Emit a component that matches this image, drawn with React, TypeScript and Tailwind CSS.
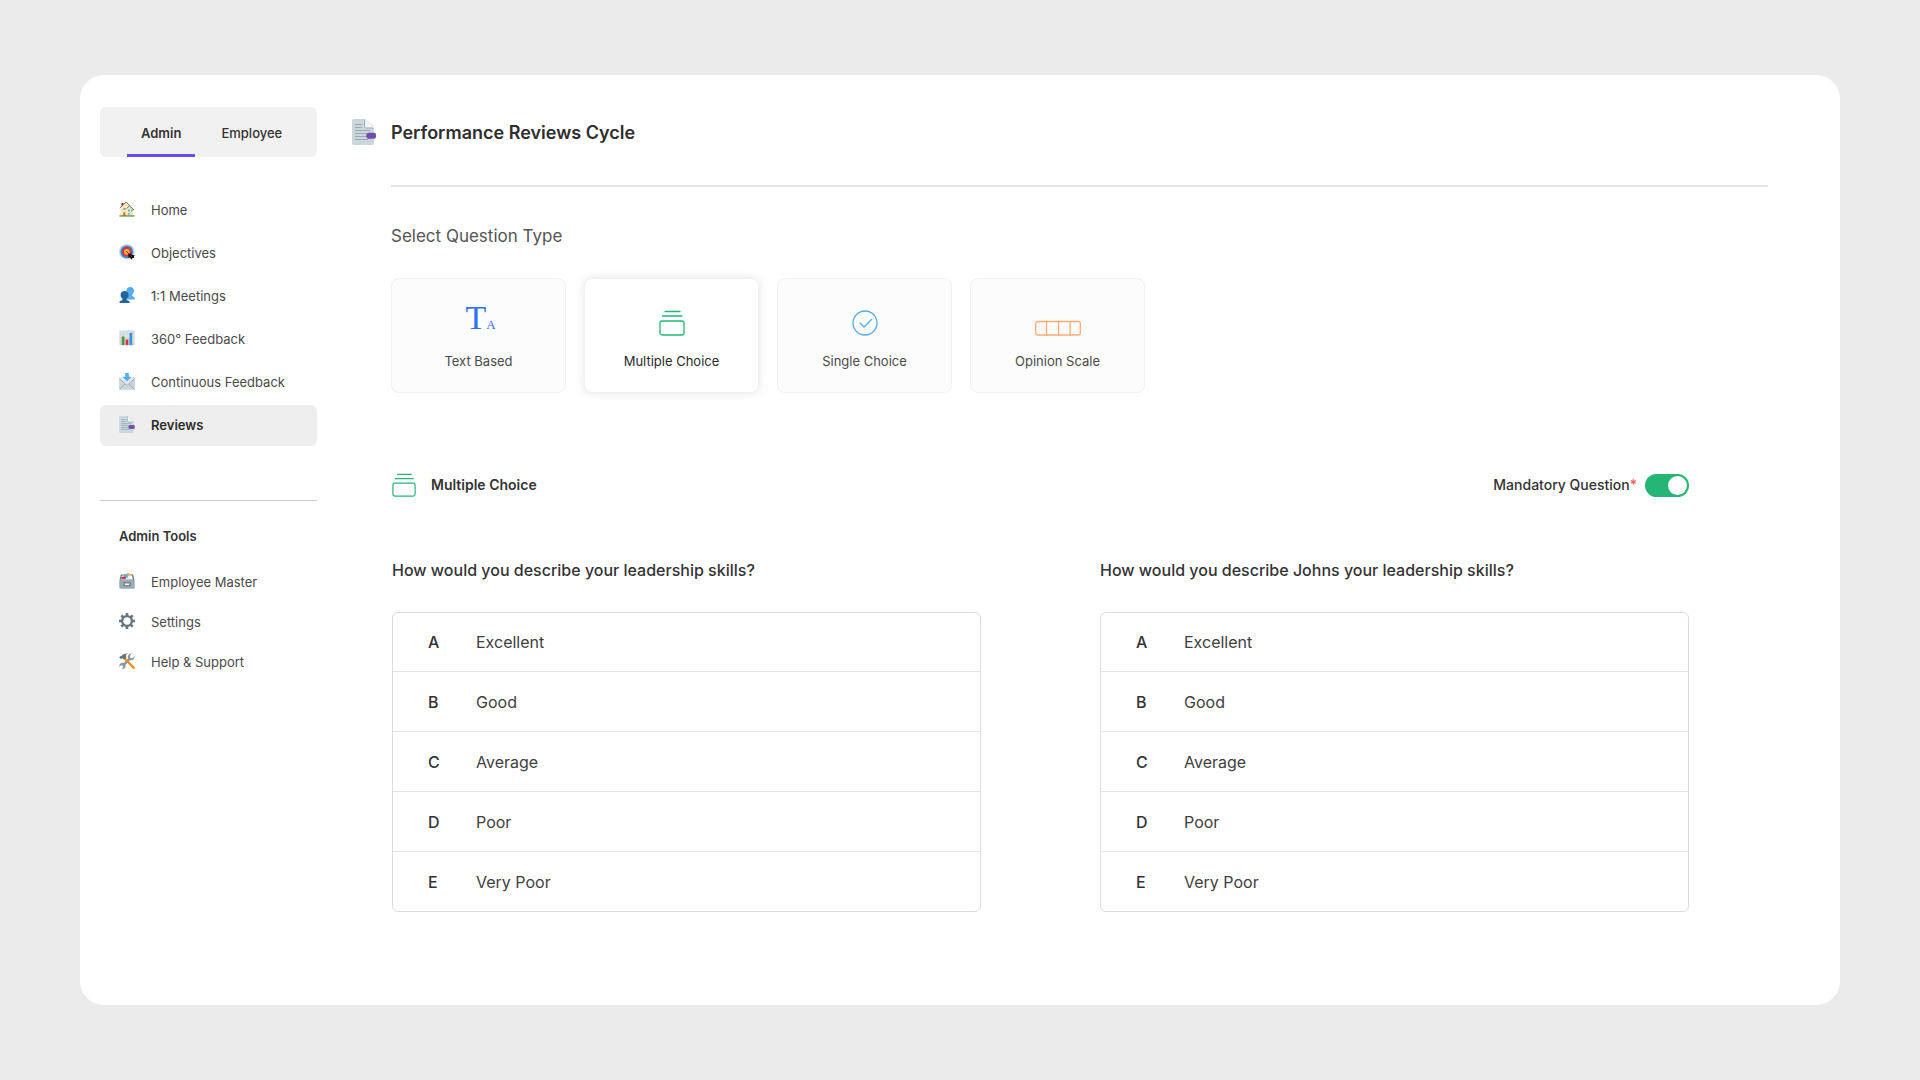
import { useState } from "react";
import type { ReactNode } from "react";

interface NavItem {
  label: string;
  icon: ReactNode;
}

interface Question {
  title: string;
  options: string[];
}

function HomeIcon() {
  return (
    <svg viewBox="0 0 16 16" className="size-4 shrink-0" aria-hidden="true">
      <path d="M2.5 2h2v4h-2z" fill="#be1931" />
      <path d="M1.5 6.5 7.5 1l6.5 6.5V15h-12.5z" fill="#ffe8b6" />
      <path d="m.8 7 6.4-6 4 4M7.5 7.5 10.5 5l4.6 4" fill="none" stroke="#66757f" strokeWidth="1" />
      <path d="M4.5 7h2v2h-2zM9 8.5h1.8v2H9zM12 8.5h1.5v2H12zM9 12h1.8v1.5H9z" fill="#55acee" />
      <path d="M4.3 11.3h2V15h-2z" fill="#c1694f" />
      <path d="M.5 14.3h15V15.6H.5z" fill="#5c913b" />
    </svg>
  );
}

function TargetIcon() {
  return (
    <svg viewBox="0 0 16 16" className="size-4 shrink-0" aria-hidden="true">
      <circle cx="7.8" cy="7.8" r="7.8" fill="#ccd6dd" />
      <circle cx="7.8" cy="7.8" r="6.4" fill="#3b88c3" />
      <circle cx="7.8" cy="7.8" r="4.7" fill="#dd2e44" />
      <circle cx="7.8" cy="7.8" r="2.9" fill="#ffac33" />
      <path d="m7 7 4 4" stroke="#a0041e" strokeWidth=".8" />
      <path d="M9.3 10.2 12 9.6l1.2 1.3 2.6.4-1 1.4.4 1.5-1.6-.2-1.2 1.8-1.2-2.2-1.8-.2z" fill="#0b0b0b" />
      <path d="m10.5 10.5 2.4 2.4" stroke="#be1931" strokeWidth=".8" />
    </svg>
  );
}

function PeopleIcon() {
  return (
    <svg viewBox="0 0 16 16" className="size-4 shrink-0" aria-hidden="true">
      <path
        d="M11.2 0c2.3 0 3.8 1.5 3.8 3.8 0 1.8-.8 3-1.8 3.9v1.1c0 .8 2.6.5 2.6 2.9v.8H8V6L7.4 3.8C7.4 1.5 8.9 0 11.2 0Z"
        fill="#55acee"
      />
      <path
        d="M5.6 4c2.4 0 4 1.6 4 3.9 0 1.7-.8 3-1.9 3.8v1c0 .8 3 .6 3 2.7v.6H.5v-.6c0-2.1 3-1.9 3-2.7v-1C2.4 10.9 1.6 9.6 1.6 7.9 1.6 5.6 3.2 4 5.6 4Z"
        fill="#226699"
      />
    </svg>
  );
}

function ChartIcon() {
  return (
    <svg viewBox="0 0 16 16" className="size-4 shrink-0" aria-hidden="true">
      <rect x=".4" y=".4" width="15.2" height="15.2" rx="1.4" fill="#ccd6dd" />
      <path
        d="M1.6 1.6h2.4v2H1.6zM5 1.6h2.6v2H5zM8.6 1.6h2.4v2H8.6zM1.6 4.6h1.2v2.4H1.6zM5.4 4.6h2.2v3H5.4zM8.6 4.6h1.6v3H8.6zM13.6 4.6h1v8h-1z"
        fill="#e1e8ed"
      />
      <path d="M2.8 6.5h2.7V15H2.8z" fill="#5c913b" />
      <path d="M6.7 9.6h2.6V15H6.7z" fill="#dd2e44" />
      <path d="M10.5 3h2.7v12h-2.7z" fill="#3b94d9" />
    </svg>
  );
}

function InboxIcon() {
  return (
    <svg viewBox="0 0 16 17" className="h-[17px] w-4 shrink-0" aria-hidden="true">
      <rect y="4.5" width="16" height="12.3" rx="1.4" fill="#ccd6dd" />
      <path d="M.5 16.3 5.8 11M15.5 16.3 10.2 11" stroke="#99aab5" strokeWidth="1" />
      <path d="M.3 5 8 12.2 15.7 5c-.3-.3-.7-.5-1.1-.5H1.4C1 4.5.6 4.7.3 5Z" fill="#e1e8ed" />
      <path d="m.4 5.5 6.6 6.2c.6.5 1.4.5 2 0l6.6-6.2" fill="none" stroke="#99aab5" strokeWidth=".9" />
      <path d="M6.2 0h3.6v3.8h2.7L8 8.3 3.5 3.8h2.7z" fill="#55acee" />
    </svg>
  );
}

function ReviewIcon({ className }: { className: string }) {
  return (
    <svg viewBox="0 0 24 26" className={className} aria-hidden="true">
      <path d="M2 0h12l8 8v16a2 2 0 0 1-2 2H2a2 2 0 0 1-2-2V2a2 2 0 0 1 2-2Z" fill="#ccd6dd" />
      <path d="M13 0v7a2 2 0 0 0 2 2h7L14 .2z" fill="#f2f6f8" />
      <path d="M12.6.5v6.9c0 .9.7 1.6 1.6 1.6H21" fill="none" stroke="#99aab5" strokeWidth="1" />
      <path
        d="M3 5.5h7M3 8.5h7M3 11.5h15M3 14.5h15M3 17.5h15M3 20.5h13"
        stroke="#99aab5"
        strokeWidth="1.2"
      />
      <path
        d="M16.5 13.7H22a2 2 0 0 1 2 2v2a2 2 0 0 1-2 2h-5.5c-1.4 0-2.3-1.7-2.3-3s.9-3 2.3-3Z"
        fill="#744eaa"
      />
    </svg>
  );
}

function CabinetIcon() {
  return (
    <svg viewBox="0 0 16 16" className="size-4 shrink-0" aria-hidden="true">
      <path d="M1.8 1.5h12.4l1.3 6H.5z" fill="#66757f" />
      <path d="M2.8 2.5h10.4L14 7.5H2z" fill="#e1e8ed" />
      <circle cx="9" cy="2" r="2" fill="#ffac33" />
      <path d="M5 1.6h3.6v3H5z" fill="#55acee" />
      <path d="M9.2 2.6h3.6v3.2H9.2z" fill="#f5f8fa" />
      <path d="M2.6 3.8h4.2v2.4H2.6z" fill="#dd2e44" />
      <rect x=".3" y="6.5" width="15.4" height="9.3" rx="1.4" fill="#99aab5" />
      <rect x="4.6" y="9.3" width="6.8" height="4" rx=".6" fill="#66757f" />
      <rect x="5.8" y="10.4" width="4.4" height="1.8" fill="#f5f8fa" />
    </svg>
  );
}

function GearIcon() {
  return (
    <svg viewBox="0 0 16 16" className="size-4 shrink-0" aria-hidden="true" fill="none" stroke="#66757f">
      <circle cx="8" cy="8" r="4.9" strokeWidth="2.4" />
      <path
        d="M8 0v3M8 13v3M0 8h3M13 8h3M2.3 2.3l2.1 2.1M11.6 11.6l2.1 2.1M13.7 2.3l-2.1 2.1M4.4 11.6l-2.1 2.1"
        strokeWidth="2.6"
      />
    </svg>
  );
}

function ToolsIcon() {
  return (
    <svg viewBox="0 0 16 16" className="size-4 shrink-0" aria-hidden="true">
      <path
        d="M15.7 3.3 13.5 5.3l-2.1-.4-.5-2.1L12.8.5C11 .2 9 1.5 8.9 3.6c0 .7.1 1.2.3 1.7L4.9 10c-1.3-.5-3.1-.1-4 1.1-.7 1-.7 2-.5 2.7l1.9-1.5 1.5.4.4 1.4L2.8 16c1.7.2 3.2-.7 3.7-2.1.2-.7.2-1.4 0-2l4.3-4.7c2.3.7 4.9-1 4.9-3.9Z"
        fill="#8899a6"
      />
      <path d="m5.2 5 9.4 9.8" stroke="#f4900c" strokeWidth="2.3" strokeLinecap="round" />
      <path
        d="M.2 4.4 1.6 3l.8.1C3.8 1.4 5.7.1 9.2.6 7.7 1 7 1.7 6.9 2.7c0 .7.3 1.2.7 1.7L5.2 6.8C4.5 6 3.6 5.3 2.9 5.3L2 6.2z"
        fill="#66757f"
      />
    </svg>
  );
}

function TextTypeIcon() {
  return (
    <span className="flex items-baseline pl-1 font-['Liberation_Serif',serif] text-[#2b72f6]" aria-hidden="true">
      <span className="text-[34px] leading-9">T</span>
      <span className="text-[13px] leading-4">A</span>
    </span>
  );
}

function StackIcon({ className }: { className: string }) {
  return (
    <svg viewBox="0 0 26 26" className={className} fill="none" stroke="#25b574" aria-hidden="true">
      <path d="M6 1.5h15" strokeWidth="1.3" strokeLinecap="round" />
      <path d="M3.5 6h19.5" strokeWidth="1.3" strokeLinecap="round" />
      <rect x="1" y="11" width="24" height="14" rx="2" strokeWidth="1.3" />
    </svg>
  );
}

function CheckCircleIcon() {
  return (
    <svg viewBox="0 0 26 26" className="size-[26px]" fill="none" stroke="#55acee" strokeWidth="1.3" aria-hidden="true">
      <circle cx="13" cy="13" r="12" />
      <path d="m8 13 4 4 7.5-7.5" strokeLinecap="round" strokeLinejoin="round" />
    </svg>
  );
}

function ScaleIcon() {
  return (
    <svg viewBox="0 0 46 16" className="h-4 w-[46px]" fill="none" stroke="#ffab76" strokeWidth="1.3" aria-hidden="true">
      <rect x=".7" y="1.5" width="44.6" height="13.5" rx="2" />
      <path d="M11.5 1.5v13.5M23.5 1.5v13.5M35 1.5v13.5" />
    </svg>
  );
}

const MAIN_NAV: NavItem[] = [
  { label: "Home", icon: <HomeIcon /> },
  { label: "Objectives", icon: <TargetIcon /> },
  { label: "1:1 Meetings", icon: <PeopleIcon /> },
  { label: "360° Feedback", icon: <ChartIcon /> },
  { label: "Continuous Feedback", icon: <InboxIcon /> },
  { label: "Reviews", icon: <ReviewIcon className="h-[17px] w-4 shrink-0" /> },
];

const ADMIN_NAV: NavItem[] = [
  { label: "Employee Master", icon: <CabinetIcon /> },
  { label: "Settings", icon: <GearIcon /> },
  { label: "Help & Support", icon: <ToolsIcon /> },
];

const QUESTION_TYPES: NavItem[] = [
  { label: "Text Based", icon: <TextTypeIcon /> },
  { label: "Multiple Choice", icon: <StackIcon className="size-[26px]" /> },
  { label: "Single Choice", icon: <CheckCircleIcon /> },
  { label: "Opinion Scale", icon: <ScaleIcon /> },
];

const RATINGS = ["Excellent", "Good", "Average", "Poor", "Very Poor"];

const QUESTIONS: Question[] = [
  { title: "How would you describe your leadership skills?", options: RATINGS },
  { title: "How would you describe Johns your leadership skills?", options: RATINGS },
];

function Sidebar() {
  const [role, setRole] = useState("Admin");

  return (
    <aside className="w-[217px] shrink-0 text-[13px] leading-5">
      <div className="flex h-[50px] gap-3 rounded-md bg-[#f1f1f1] pl-[27px]">
        {["Admin", "Employee"].map((name) => (
          <button
            key={name}
            onClick={() => setRole(name)}
            className={`border-b-3 px-3.5 pt-1 text-[#333] ${
              role === name ? "border-[#6b4df6] font-semibold" : "border-transparent font-medium"
            }`}
          >
            {name}
          </button>
        ))}
      </div>

      <nav className="mt-[33px] flex flex-col gap-0.5">
        {MAIN_NAV.map((item) => (
          <a
            key={item.label}
            href="#"
            className={`flex h-[41px] items-center gap-4 rounded-md pb-px pl-[19px] [&>svg]:mb-0.5 ${
              item.label === "Reviews" ? "bg-[#eee] font-semibold text-[#2b2b2b]" : "text-[#4a4a4a]"
            }`}
          >
            {item.icon}
            {item.label}
          </a>
        ))}
      </nav>

      <hr className="mt-[54px] border-[#ccc]" />

      <h2 className="mt-[25px] pl-[19px] font-semibold text-[#333]">Admin Tools</h2>
      <nav className="mt-4 flex flex-col">
        {ADMIN_NAV.map((item) => (
          <a
            key={item.label}
            href="#"
            className="flex h-10 items-center gap-4 pl-[19px] text-[#4a4a4a] [&>svg]:mb-0.5"
          >
            {item.icon}
            {item.label}
          </a>
        ))}
      </nav>
    </aside>
  );
}

function QuestionBlock({ question }: { question: Question }) {
  return (
    <div>
      <h3 className="text-base leading-6 font-medium text-[#333]">{question.title}</h3>
      <ol className="mt-[30px] divide-y divide-[#e4e4e4] rounded-md border border-[#dcdcdc] text-base text-[#404040]">
        {question.options.map((option, i) => (
          <li key={option} className="flex h-[60px] items-center pl-[35px] first:h-[59px] last:h-[59px]">
            <span className="w-12 font-medium text-[#333]">{String.fromCharCode(65 + i)}</span>
            {option}
          </li>
        ))}
      </ol>
    </div>
  );
}

export default function App() {
  const [type, setType] = useState("Multiple Choice");
  const [mandatory, setMandatory] = useState(true);

  return (
    <div className="flex min-h-screen bg-[#ebebeb] px-20 py-[75px] font-['Inter',sans-serif]">
      <div className="flex flex-1 gap-[35px] rounded-3xl bg-white pt-8 pr-[72px] pb-8 pl-5">
        <Sidebar />

        <main className="min-w-0 flex-1">
          <header className="flex h-[50px] items-center gap-[15px]">
            <ReviewIcon className="h-[26px] w-6" />
            <h1 className="pt-0.5 text-lg font-semibold text-[#2e2e2e]">Performance Reviews Cycle</h1>
          </header>

          <div className="pl-[39px]">
            <hr className="mt-7 border-t-2 border-[#e5e5e5]" />

            <h2 className="mt-[37px] text-[17px] leading-6 text-[#555]">Select Question Type</h2>
            <div className="mt-[30px] flex gap-[18px]">
              {QUESTION_TYPES.map((item) => (
                <button
                  key={item.label}
                  onClick={() => setType(item.label)}
                  aria-pressed={type === item.label}
                  className={`flex h-[115px] w-[175px] flex-col items-center justify-end gap-[15px] rounded-lg border border-[#f0f0f0] pb-[21px] text-[13px] leading-5 ${
                    type === item.label
                      ? "bg-white text-[#2b2b2b] shadow-[0_0_10px_rgba(0,0,0,0.1)]"
                      : "bg-[#fcfcfc] text-[#4a4a4a]"
                  }`}
                >
                  {item.icon}
                  {item.label}
                </button>
              ))}
            </div>

            <section className="mt-20 mr-[79px] ml-px">
              <div className="flex items-center justify-between">
                <h2 className="flex items-center gap-[15px] text-sm leading-6 font-semibold text-[#333]">
                  <StackIcon className="size-6" />
                  Multiple Choice
                </h2>
                <label className="flex items-center gap-2 text-sm leading-6 font-medium text-[#333]">
                  <span>
                    Mandatory Question<span className="text-[#ff5a4f]">*</span>
                  </span>
                  <input
                    type="checkbox"
                    role="switch"
                    checked={mandatory}
                    onChange={(e) => setMandatory(e.target.checked)}
                    className="flex h-[23px] w-11 appearance-none items-center rounded-full bg-[#ccc] px-0.5 before:size-[19px] before:rounded-full before:bg-white checked:justify-end checked:bg-[#25b574]"
                  />
                </label>
              </div>

              <div className="mt-[61px] grid grid-cols-2 gap-[119px]">
                {QUESTIONS.map((q) => (
                  <QuestionBlock key={q.title} question={q} />
                ))}
              </div>
            </section>
          </div>
        </main>
      </div>
    </div>
  );
}
